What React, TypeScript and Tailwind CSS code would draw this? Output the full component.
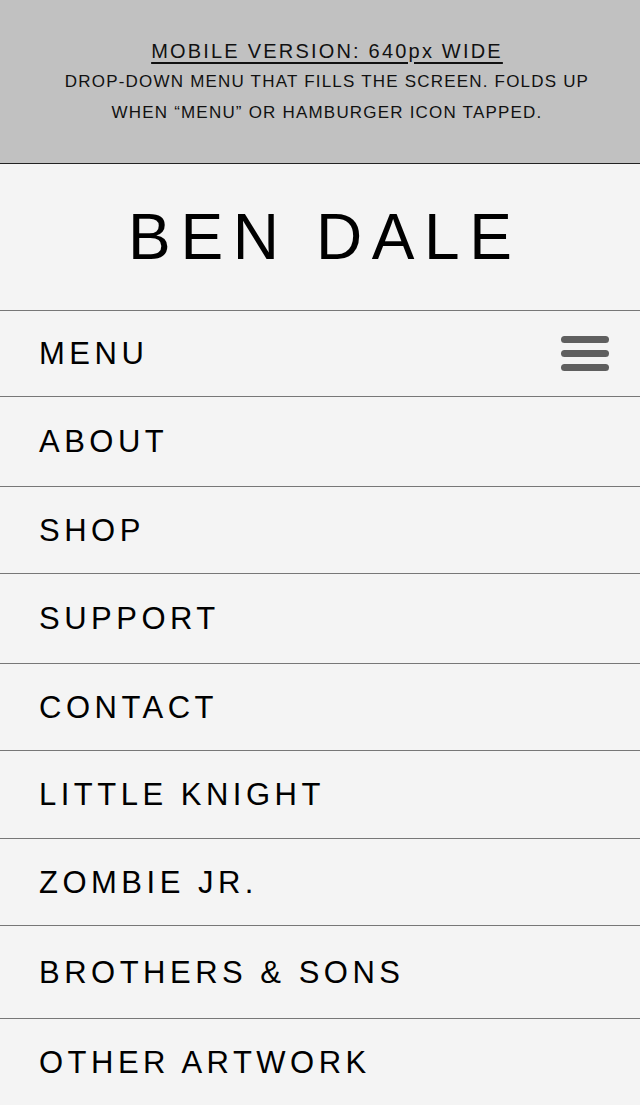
import React from "react";

const items: { label: string; h: string }[] = [
  { label: "ABOUT", h: "h-[90px]" },
  { label: "SHOP", h: "h-[87px]" },
  { label: "SUPPORT", h: "h-[90px]" },
  { label: "CONTACT", h: "h-[87px]" },
  { label: "LITTLE KNIGHT", h: "h-[88px]" },
  { label: "ZOMBIE JR.", h: "h-[87px]" },
  { label: "BROTHERS & SONS", h: "h-[93px]" },
  { label: "OTHER ARTWORK", h: "h-[87px]" },
];

export default function App() {
  return (
    <div className="w-[640px] h-[1105px] overflow-hidden bg-[#f4f4f4] text-black font-['Liberation_Sans',Arial,sans-serif]">
      <div className="h-[164px] bg-[#c1c1c1] border-b border-[#222] flex flex-col items-center justify-center pl-[14px] text-[#111]">
        <div className="text-[20px] leading-[30px] tracking-[2.2px] underline underline-offset-[4px] decoration-[1.5px]">
          MOBILE VERSION: 640px WIDE
        </div>
        <div className="text-[17px] leading-[31px] tracking-[1.2px] text-center">
          DROP-DOWN MENU THAT FILLS THE SCREEN. FOLDS UP
          <br />
          WHEN “MENU” OR HAMBURGER ICON TAPPED.
        </div>
      </div>
      <div className="h-[147px] border-b border-[#777] flex items-center justify-center">
        <div className="text-[64px] leading-none tracking-[0.15em] pl-[0.15em]">BEN DALE</div>
      </div>
      <div className="h-[86px] border-b border-[#777] flex items-center justify-between pl-[39px] pr-[31px]">
        <span className="text-[31px] leading-none tracking-[4.5px]">MENU</span>
        <div className="flex flex-col gap-[7px]">
          <div className="w-[48px] h-[7px] rounded-full bg-[#5f5f5f]" />
          <div className="w-[48px] h-[7px] rounded-full bg-[#5f5f5f]" />
          <div className="w-[48px] h-[7px] rounded-full bg-[#5f5f5f]" />
        </div>
      </div>
      {items.map((it, i) => (
        <div
          key={it.label}
          className={`${it.h} ${i < items.length - 1 ? "border-b border-[#777]" : ""} flex items-center pl-[39px]`}
        >
          <span className="text-[31px] leading-none tracking-[4.5px] whitespace-pre">{it.label}</span>
        </div>
      ))}
    </div>
  );
}
